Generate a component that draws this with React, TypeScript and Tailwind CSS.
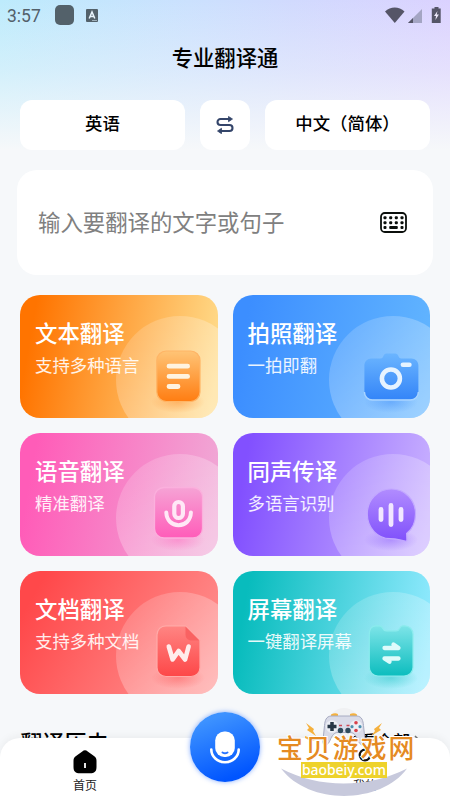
import type { ReactNode } from "react"

type Feature = {
	id: string
	title: string
	desc: string
	bg: string
	from: string
	to: string
	art: ReactNode
}

function TextArt() {
	return (
		<>
			<rect x="136.8" y="56" width="43.2" height="50.5" rx="9.5" fill="url(#g-text)" stroke="#ffb566" strokeWidth="1.2" />
			<path d="M149 71.2h18.6M149 81.4h18.6M149 91.5h9" stroke="#fff3e0" strokeWidth="4.8" strokeLinecap="round" />
		</>
	)
}

function PhotoArt() {
	return (
		<g transform="translate(-0.6 0)">
			<path
				d="M139 63.5h9c2 0 2.4-1 3-2.5.6-1.6 1.5-2.5 3-2.5h9c1.5 0 2.4.9 3 2.5.6 1.5 1 2.5 3 2.5h10c4 0 7 3 7 7v26c0 4.5-3.500 8-8 8h-38c-4.500 0-8-3.500-8-8v-26c0-4 3-7 7-7z"
				fill="url(#g-photo)"
			/>
			<path d="M132 97c0 4.500 3.500 8 8 8h38c4.500 0 8-3.500 8-8" fill="none" stroke="#a9d4ff" strokeWidth="1.5" />
			<circle cx="158.5" cy="83.5" r="9" fill="none" stroke="#e6f3ff" strokeWidth="4.6" />
			<path d="M170.5 69.800h6.500" stroke="#e6f3ff" strokeWidth="4.6" strokeLinecap="round" />
		</g>
	)
}

function VoiceArt() {
	return (
		<>
			<rect x="134.5" y="54.5" width="48" height="50.5" rx="9.5" fill="url(#g-voice)" stroke="#fbb0dd" strokeWidth="1.3" />
			<rect x="154.3" y="69" width="8.6" height="16" rx="4.3" fill="none" stroke="#ffe8f6" strokeWidth="4.2" />
			<path d="M146.3 79.500c.3 7.800 5.500 12.700 12.300 12.700s12-4.900 12.300-12.700" fill="none" stroke="#ffe8f6" strokeWidth="4" strokeLinecap="round" />
		</>
	)
}

function InterpretArt() {
	return (
		<>
			<path
				d="M158.3 56c-13.800 0-24 11-24 24.700 0 14.500 10.500 24.800 22.800 24.900 5 0 8.500.9 15.300 2.500.9.2 1.500-.3 1.500-1.300l-.3-6.300c5.200-4 8.900-11 8.900-19.800 0-13.700-10.400-24.700-24.200-24.700z"
				fill="url(#g-interpret)"
				stroke="#c2a8ff"
				strokeWidth="1.2"
			/>
			<path d="M148 76.500v10M158 72.500v19M168 76.500v10" stroke="#f1e7ff" strokeWidth="4.8" strokeLinecap="round" />
		</>
	)
}

function DocArt() {
	return (
		<>
			<path d="M146 54.800h19.500L180 69.500v27c0 5-3.800 9-9 9h-25c-5.200 0-9-4-9-9v-32.700c0-5.200 3.800-9 9-9z" fill="url(#g-doc)" stroke="#ffaaa8" strokeWidth="1.2" />
			<path d="M165.500 55.500v8c0 3.500 2.500 6 6 6h8z" fill="#f96262" />
			<path d="M148.800 75.500l3.800 13 6-8.500 6.500 8.500 3.500-13" fill="none" stroke="#ffeceb" strokeWidth="4.6" strokeLinecap="round" strokeLinejoin="round" />
		</>
	)
}

function ScreenArt() {
	return (
		<>
			<path
				d="M143 54.800h3.500c1.800 0 2.500 1 3.200 2.500.7 1.700 1.800 2.500 3.500 2.500h10c1.700 0 2.800-.8 3.500-2.500.7-1.500 1.400-2.500 3.200-2.500h1.600c5 0 8.500 3.700 8.500 8.500v33c0 5-3.800 8.700-9 8.700h-26c-5 0-8.700-3.700-8.700-8.700v-33c0-4.800 2-8.500 6.700-8.500z"
				fill="url(#g-screen)"
				stroke="#8bebed"
				strokeWidth="1.2"
			/>
			<path d="M151.500 77h14l-5-3.500M165.500 87.500h-14l5 3.300" fill="none" stroke="#defbfb" strokeWidth="4.3" strokeLinecap="round" strokeLinejoin="round" />
		</>
	)
}

const features: Feature[] = [
	{ id: "text", title: "文本翻译", desc: "支持多种语言", bg: "bg-[linear-gradient(100deg,#ff7400_8%,#ffa845_52%,#ffdc8b_96%)]", from: "#ffc476", to: "#ff7d12", art: <TextArt /> },
	{ id: "photo", title: "拍照翻译", desc: "一拍即翻", bg: "bg-[linear-gradient(100deg,#3c8eff_8%,#62b5ff_96%)]", from: "#6bb5ff", to: "#3485f8", art: <PhotoArt /> },
	{ id: "voice", title: "语音翻译", desc: "精准翻译", bg: "bg-[linear-gradient(100deg,#ff5cb8_8%,#f0a9d6_96%)]", from: "#f6a3d5", to: "#ff5cb9", art: <VoiceArt /> },
	{ id: "interpret", title: "同声传译", desc: "多语言识别", bg: "bg-[linear-gradient(100deg,#8250ff_8%,#c8b0ff_96%)]", from: "#b18cff", to: "#8050fb", art: <InterpretArt /> },
	{ id: "doc", title: "文档翻译", desc: "支持多种文档", bg: "bg-[linear-gradient(120deg,#ff484a_10%,#ff9493_96%)]", from: "#ff8583", to: "#fd4748", art: <DocArt /> },
	{ id: "screen", title: "屏幕翻译", desc: "一键翻译屏幕", bg: "bg-[linear-gradient(100deg,#08bcbd_8%,#92eaff_96%)]", from: "#7de4e8", to: "#0cbdbe", art: <ScreenArt /> },
]

function FeatureCard({ item }: { item: Feature }) {
	return (
		<div className={`relative h-[122.5px] overflow-hidden rounded-[20px] pl-[15px] pt-[22px] text-white ${item.bg}`}>
			<svg className="absolute inset-0 h-full w-full" viewBox="0 0 197.5 122.5">
				<defs>
					<linearGradient id={`g-${item.id}`} x1="0" y1="0" x2="0" y2="1">
						<stop offset="0" stopColor={item.from} />
						<stop offset="1" stopColor={item.to} />
					</linearGradient>
					<linearGradient id={`c-${item.id}`} x1="0" y1="0" x2="1" y2="1">
						<stop offset="0" stopColor="#fff" stopOpacity="0.12" />
						<stop offset="1" stopColor="#fff" stopOpacity="0.45" />
					</linearGradient>
					<radialGradient id={`s-${item.id}`}>
						<stop offset="0" stopColor={item.to} stopOpacity="0.4" />
						<stop offset="1" stopColor={item.to} stopOpacity="0" />
					</radialGradient>
				</defs>
				<circle cx="160" cy="85" r="64" fill={`url(#c-${item.id})`} />
				<ellipse cx="158" cy="107" rx="27" ry="11" fill={`url(#s-${item.id})`} />
				{item.art}
			</svg>
			<h2 className="relative text-[22.4px] font-medium leading-[30px]">{item.title}</h2>
			<p className="relative mt-[6px] text-[17.4px] leading-6 text-white/90">{item.desc}</p>
		</div>
	)
}

function StatusBar() {
	return (
		<div className="flex h-[30px] items-center pl-[7px] pr-2 text-[#53606a]">
			<span className="w-12 pt-px font-[Roboto] text-[17.5px] leading-[30px]">3:57</span>
			<span className="h-[19.5px] w-[19px] rounded-[5px] bg-[#53616a]" />
			<svg className="ml-3 h-[13px] w-3" viewBox="0 0 12 13">
				<rect width="12" height="13" rx="1" fill="#53616a" />
				<path d="M3.2 9.500L6 3l2.800 6.500M4.200 7.500h3.600" fill="none" stroke="#e7f3fb" strokeWidth="1.5" />
				<path d="M6 11.500h5" stroke="#9fb0ba" strokeWidth="1" />
			</svg>
			<svg className="ml-auto h-[18px] w-[57px]" viewBox="0 0 57 18">
				<path d="M0 5.500C5.500.3 14 .3 19.500 5.500L9.800 17z" fill="#555567" />
				<path d="M37 3v14H23z" fill="#a4a5c3" />
				<path d="M28 12v5h-5z" fill="#555567" />
				<path d="M49.500 1h4v1.500h2.200V17h-8.900V2.500h2.700z" fill="#555567" />
				<path d="M52.500 5l-3.500 5h2l-.6 4 3.500-5.500h-2.200z" fill="#eeeafa" />
			</svg>
		</div>
	)
}

function Keyboard() {
	const cols = [5, 10.7, 16.3, 22]
	return (
		<svg className="h-[21px] w-[27px]" viewBox="0 0 27 21">
			<rect x="1" y="1" width="25" height="19" rx="3.8" fill="none" stroke="#0b0f0c" strokeWidth="1.8" />
			{cols.map((x) => (
				<g key={x} fill="#0b0f0c">
					<rect x={x - 1.5} y="4.2" width="3" height="3" rx="1" />
					<rect x={x - 1.5} y="9.2" width="3" height="3" rx="1" />
				</g>
			))}
			<rect x="3.5" y="14" width="3" height="3" rx="1" fill="#0b0f0c" />
			<rect x="9.2" y="14" width="8.6" height="3" rx="1" fill="#0b0f0c" />
			<rect x="20.5" y="14" width="3" height="3" rx="1" fill="#0b0f0c" />
		</svg>
	)
}

function SiteBadge() {
	return (
		<div className="absolute left-[270px] top-[706px] h-[92px] w-[150px]">
			<svg className="absolute inset-0 h-full w-full" viewBox="0 0 150 92">
				<ellipse cx="74" cy="18" rx="16" ry="16" fill="#f0f1f3" />
				<path d="M11 62.500c38 20 87 20 126 0-25 35-97 38-126 0z" fill="#c7c9dc" />
				<g fill="#f5b13d">
					<path d="M36 17l8 6-1 2 3 5-9-6 2-2zM35 30l5 2 1 1 4 1-3 1-3-1-4-2z" />
					<path d="M112 17l-8 6 1 2-4 5 10-6-2-2zM111 31l-5 1-2 1-3 1 3 1 3-1z" />
					<path d="M61 8.500q4-2 7-.5v3h-7zM80 8q4-1.500 7 .5v2.500h-7z" />
				</g>
				<path
					d="M61 10h26c5 .5 6 4.500 6.500 9.500l1.500 15c.5 6-4.500 6-7 0-2-5-4-8-8-8H68c-4 0-6 3-8 8-2.500 6-7.500 6-7 0l1.500-15C55 14.500 56 10.500 61 10z"
					fill="#d9dbe8"
					stroke="#a8acc2"
					strokeWidth="1"
				/>
				<circle cx="62" cy="20.500" r="6.300" fill="#eceef5" />
				<circle cx="86" cy="20.500" r="6.300" fill="#eceef5" />
				<path d="M62 16v9M57.500 20.500h9" stroke="#273746" strokeWidth="3.5" />
				<g fill="#d8404a">
					<circle cx="86" cy="16.800" r="1.8" />
					<circle cx="86" cy="24.500" r="1.8" />
				</g>
				<g fill="#4b8faf">
					<circle cx="82" cy="20.700" r="1.6" />
					<circle cx="90" cy="20.700" r="1.6" />
				</g>
				<circle cx="70.500" cy="24.500" r="2.7" fill="#304b5d" />
				<circle cx="78" cy="24.500" r="2.7" fill="#304b5d" />
				<path d="M69 19.500h3M76.500 19.500h3" stroke="#cf4753" strokeWidth="1.5" />
			</svg>
			<div className="relative ml-[7px] mt-[26px] whitespace-nowrap text-[25.8px] font-medium leading-[30px] tracking-[2.1px] text-[#e58a22] [paint-order:stroke_fill] [-webkit-text-stroke:2px_white]">宝贝游戏网</div>
			<div className="relative ml-[31px] flex h-4 w-[86px] items-center justify-center bg-[#eed22b] pb-px font-['Noto_Sans'] text-[14px] font-medium leading-4 tracking-[-0.1px] text-white">baobeiy.com</div>
		</div>
	)
}

function BottomNav() {
	return (
		<nav className="absolute inset-x-0 bottom-0 flex h-[62px] justify-between rounded-t-[20px] bg-white px-[65px] text-[12px] leading-4 text-[#222] shadow-[0_-2px_8px_rgba(0,0,0,0.05)]">
			<div className="flex w-10 flex-col items-center pt-[12px]">
				<svg className="h-6 w-6" viewBox="0 0 24 24">
					<path d="M12 .3c1 0 1.800.5 2.700 1.200l6.300 4.500c1.800 1.400 2.500 2.600 2.500 4.800V17c0 4.500-2 6.300-6.500 6.300H7C2.500 23.300.5 21.500.5 17v-6.200c0-2.200.7-3.400 2.500-4.800l6.300-4.500C10.200.8 11 .3 12 .3z" fill="#000" />
					<path d="M12 13v5" stroke="#fff" strokeWidth="1.8" />
				</svg>
				<span className="mt-[3px]">首页</span>
			</div>
			<div className="flex w-10 flex-col items-center pt-[10px]">
				<svg className="h-6 w-6" viewBox="0 0 24 24">
					<circle cx="12" cy="7" r="5.3" fill="none" stroke="#111" strokeWidth="2.2" />
					<path d="M3 22c1-6 17-6 18 0z" fill="none" stroke="#111" strokeWidth="2" />
				</svg>
				<span className="mt-[5px]">我的</span>
			</div>
		</nav>
	)
}

export default function App() {
	return (
		<div className="relative h-[800px] w-[450px] overflow-hidden bg-[#f6f8fa] font-['Noto_Sans_CJK_SC',sans-serif] text-black">
			<div className="bg-[linear-gradient(to_bottom,rgba(246,248,250,0)_0,rgba(246,248,250,0.38)_70px,#f6f8fa_150px),linear-gradient(to_right,#bdebfc_0%,#cbe1fe_42%,#d1dafe_65%,#dbd2ff_100%)]">
				<StatusBar />
				<h1 className="pt-[11px] text-center text-[21.3px] font-medium leading-8">专业翻译通</h1>
				<div className="mt-[27px] flex gap-[15px] px-5 text-[17.4px] font-medium">
					<button className="h-[50px] w-[165px] rounded-[12px] bg-white pb-[3px]">英语</button>
					<button className="flex h-[50px] w-[50px] items-center justify-center rounded-[12px] bg-white">
						<svg className="h-[18px] w-[18px]" viewBox="0 0 18 18" fill="none" stroke="#34456a" strokeWidth="2.1">
							<path d="M13 3H4.500a3 3 0 0 0 0 6h9a3 3 0 0 1 0 6H5" />
							<path d="M12.500.5L16.500 3l-4 2.700zM5.500 12.300L1.500 15l4 2.700z" fill="#34456a" strokeWidth=".8" />
						</svg>
					</button>
					<button className="h-[50px] w-[165px] rounded-[12px] bg-white pb-[3px]">中文（简体）</button>
				</div>
			</div>
			<div className="mx-[17px] mt-5 flex h-[105px] items-center justify-between rounded-[20px] bg-white pl-[21px] pr-[26px]">
				<span className="pb-[3px] text-[22.4px] leading-8 text-[#808080]">输入要翻译的文字或句子</span>
				<Keyboard />
			</div>
			<div className="mt-5 grid grid-cols-2 gap-x-[15px] gap-y-[15.5px] px-5">
				{features.map((item) => (
					<FeatureCard key={item.id} item={item} />
				))}
			</div>
			<div className="mt-[32px] flex items-start justify-between pl-[20px] pr-[28px] font-medium">
				<h2 className="text-[22.2px] leading-8">翻译历史</h2>
				<span className="mt-px flex items-center text-[17px] leading-7">
					查看全部
					<svg className="ml-[3px] h-3 w-[9px]" viewBox="0 0 9 12">
						<path d="M2 1l5 5-5 5" fill="none" stroke="#777" strokeWidth="1.5" />
					</svg>
				</span>
			</div>
			<BottomNav />
			<button className="absolute left-[190px] top-[712px] flex h-[70px] w-[70px] items-center justify-center rounded-full bg-[linear-gradient(160deg,#3d92ff_15%,#0055ff_85%)] shadow-[0_0_5px_rgba(40,110,255,0.55)]">
				<svg className="h-[34px] w-[34px]" viewBox="0 0 34 34">
					<rect x="7.2" y="1.5" width="19.6" height="25.5" rx="9" fill="#fff" />
					<path d="M14.500 22.500q2.500 1.500 5 0" fill="none" stroke="#2874ff" strokeWidth="2" strokeLinecap="round" />
					<path d="M3.300 19.500a13.700 12.800 0 0 0 27.400 0" fill="none" stroke="#fff" strokeWidth="2.6" strokeLinecap="round" />
				</svg>
			</button>
			<SiteBadge />
		</div>
	)
}
